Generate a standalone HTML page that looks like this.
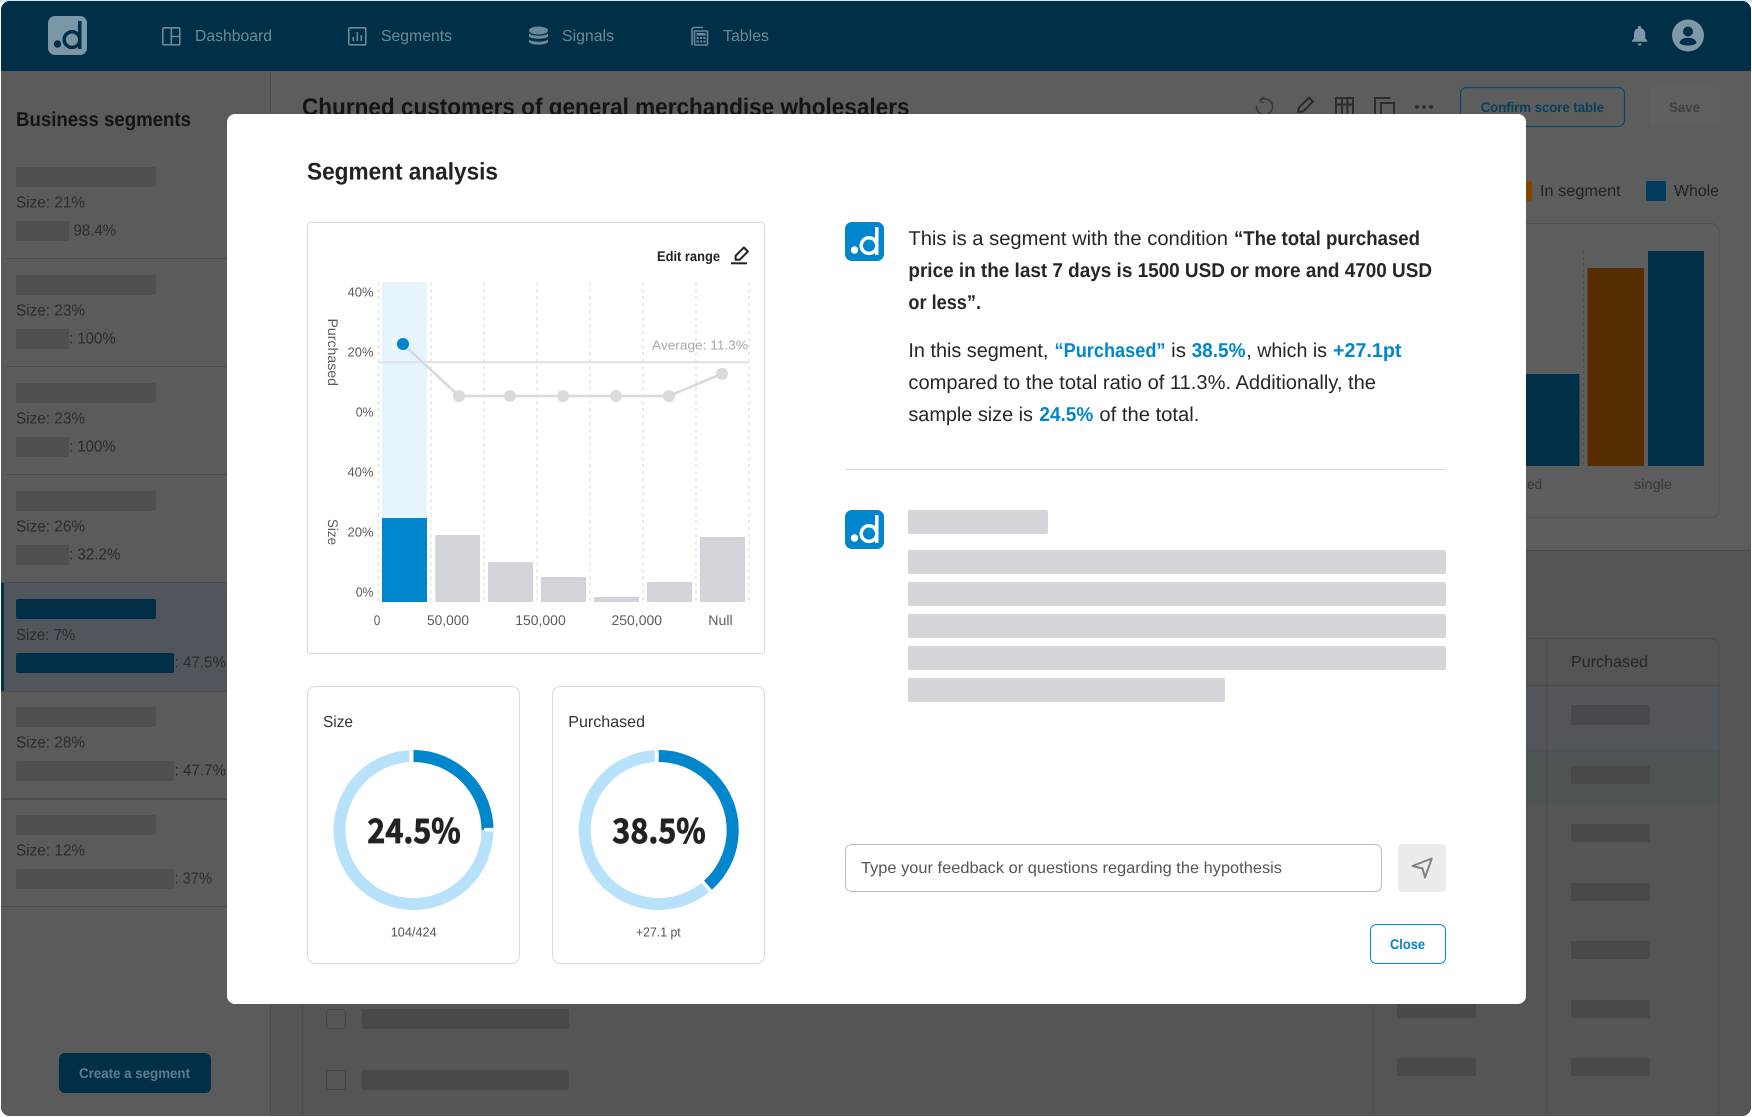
<!DOCTYPE html>
<html lang="en">
<head>
<meta charset="utf-8">
<title>Segment analysis</title>
<style>
html,body{margin:0;padding:0;background:#fff;width:1752px;height:1117px;overflow:hidden}
svg{display:block}
text{font-family:"Liberation Sans",sans-serif;text-rendering:geometricPrecision}
.b{font-weight:700}
</style>
</head>
<body>
<svg width="1752" height="1117" viewBox="0 0 1752 1117" xmlns="http://www.w3.org/2000/svg">
<defs>
<clipPath id="frame"><rect x="1" y="1" width="1750" height="1115" rx="9"/></clipPath>
<symbol id="logo" viewBox="0 0 39 39">
<rect width="39" height="39" rx="7" fill="#0086cc"/>
<circle cx="9.5" cy="28" r="3.7" fill="#fff"/>
<circle cx="24" cy="23.6" r="7.8" fill="none" stroke="#fff" stroke-width="3.5"/>
<rect x="30" y="5" width="3.5" height="28" fill="#fff"/>
</symbol>
</defs>
<rect width="1752" height="1117" fill="#fff"/>
<rect x="0" y="0" width="1752" height="2" fill="#d4e8f4"/>
<g clip-path="url(#frame)">
<rect width="1752" height="1117" fill="#595959"/>
<rect x="271" y="71" width="1481" height="480" fill="#5d5d5d"/>
<rect x="271" y="551" width="1481" height="566" fill="#555"/>
<rect y="71" width="271" height="1046" fill="#5b5b5b"/>
<rect y="0" width="1752" height="71" fill="#012f47"/>

<!-- nav -->
<rect x="48" y="16" width="39" height="39" rx="7" fill="#7b97a6"/>
<circle cx="57.5" cy="44" r="3.7" fill="#012f47"/>
<circle cx="72" cy="39.6" r="7.8" fill="none" stroke="#012f47" stroke-width="3.5"/>
<rect x="78" y="21" width="3.5" height="28" fill="#012f47"/>

<g fill="none" stroke="#6c8899" stroke-width="1.6">
<rect x="162.8" y="27.8" width="17" height="17" rx="1.2"/>
<path d="M171.3 27.8v17M171.3 36.5h8.5"/>
<rect x="348.8" y="27.8" width="17" height="17" rx="1.2"/>
<path d="M353.3 41v-4M357.3 41v-9M361.3 41v-6"/>
<path d="M692 45V29.5a2 2 0 0 1 2-2h9"/>
<rect x="694.5" y="31" width="13" height="14" rx="1"/>
</g>
<g fill="#6c8899">
<ellipse cx="538.5" cy="30.5" rx="9.5" ry="4"/>
<path d="M529 33.5c2 2.8 17 2.8 19 0v3c-2 3-17 3-19 0z"/>
<path d="M529 39.5c2 2.8 17 2.8 19 0v2.5c-2 3.6-17 3.6-19 0z"/>
<rect x="696.5" y="33" width="9" height="2.5"/>
<rect x="696.5" y="37" width="2.2" height="2"/><rect x="700" y="37" width="2.2" height="2"/><rect x="703.3" y="37" width="2.2" height="2"/>
<rect x="696.5" y="40.5" width="2.2" height="2"/><rect x="700" y="40.5" width="2.2" height="2"/><rect x="703.3" y="40.5" width="2.2" height="2"/>
</g>
<g fill="#6c8899" font-size="16">
<text x="195" y="41" textLength="77" lengthAdjust="spacingAndGlyphs">Dashboard</text>
<text x="381" y="41" textLength="71" lengthAdjust="spacingAndGlyphs">Segments</text>
<text x="562" y="41" textLength="52" lengthAdjust="spacingAndGlyphs">Signals</text>
<text x="723" y="41" textLength="46" lengthAdjust="spacingAndGlyphs">Tables</text>
</g>
<path d="M1639.7 26a1.6 1.6 0 0 1 1.6 1.6v.7c2.7.8 4 3 4 5.8v4.4l2 2.2v1h-15.3v-1l2-2.2v-4.4c0-2.8 1.3-5 4-5.8v-.7a1.6 1.6 0 0 1 1.7-1.6zM1637.7 43.5h4a2 2 0 0 1-4 0z" fill="#7e98a7"/>
<circle cx="1688" cy="35.5" r="16" fill="#7e98a7"/>
<circle cx="1688" cy="31.5" r="5" fill="#012f47"/>
<path d="M1679.5 43.5c0-4 4-5.8 8.5-5.8s8.5 1.8 8.5 5.8c-2.3 1.3-5.3 2-8.5 2s-6.2-.7-8.5-2z" fill="#012f47"/>

<!-- sidebar -->
<rect x="270" y="71" width="1" height="1046" fill="#4c4c4c"/>
<text class="b" x="16" y="126" font-size="20" fill="#141414" textLength="175" lengthAdjust="spacingAndGlyphs">Business segments</text>
<g fill="#4c4c4c">
<rect x="6" y="258" width="265" height="1"/><rect x="6" y="366" width="265" height="1"/><rect x="6" y="474" width="265" height="1"/><rect x="1" y="582" width="270" height="1"/><rect x="1" y="691" width="270" height="1"/><rect x="3" y="798" width="268" height="2"/><rect x="1" y="906" width="270" height="1"/>
</g>
<rect x="1" y="583" width="270" height="108" fill="#50565b"/>
<rect x="1" y="583" width="3" height="108" fill="#012f47"/>
<g fill="#505050">
<rect x="16" y="167" width="140" height="20" rx="1"/><rect x="16" y="221" width="53" height="20" rx="1"/>
<rect x="16" y="275" width="140" height="20" rx="1"/><rect x="16" y="329" width="53" height="20" rx="1"/>
<rect x="16" y="383" width="140" height="20" rx="1"/><rect x="16" y="437" width="53" height="20" rx="1"/>
<rect x="16" y="491" width="140" height="20" rx="1"/><rect x="16" y="545" width="53" height="20" rx="1"/>
<rect x="16" y="707" width="140" height="20" rx="1"/><rect x="16" y="761" width="158" height="20" rx="2"/>
<rect x="16" y="815" width="140" height="20" rx="1"/><rect x="16" y="869" width="158" height="20" rx="2"/>
</g>
<rect x="16" y="599" width="140" height="20" rx="2" fill="#012f47"/>
<rect x="16" y="653" width="158" height="20" rx="2" fill="#012f47"/>
<g font-size="16" fill="#2c2c2c">
<text x="16" y="207.5" textLength="69" lengthAdjust="spacingAndGlyphs">Size: 21%</text>
<text x="16" y="315.5" textLength="69" lengthAdjust="spacingAndGlyphs">Size: 23%</text>
<text x="16" y="423.5" textLength="69" lengthAdjust="spacingAndGlyphs">Size: 23%</text>
<text x="16" y="531.5" textLength="69" lengthAdjust="spacingAndGlyphs">Size: 26%</text>
<text x="16" y="640" textLength="59.3" lengthAdjust="spacingAndGlyphs">Size: 7%</text>
<text x="16" y="747.5" textLength="69" lengthAdjust="spacingAndGlyphs">Size: 28%</text>
<text x="16" y="855.5" textLength="69" lengthAdjust="spacingAndGlyphs">Size: 12%</text>
<text x="73.5" y="235.5" textLength="42.7" lengthAdjust="spacingAndGlyphs">98.4%</text>
<text x="69" y="343.5" textLength="46.7" lengthAdjust="spacingAndGlyphs">: 100%</text>
<text x="69" y="451.5" textLength="46.7" lengthAdjust="spacingAndGlyphs">: 100%</text>
<text x="69" y="559.5" textLength="51.4" lengthAdjust="spacingAndGlyphs">: 32.2%</text>
<text x="174.5" y="667.5" textLength="51.5" lengthAdjust="spacingAndGlyphs">: 47.5%</text>
<text x="174.5" y="775.5" textLength="51.5" lengthAdjust="spacingAndGlyphs">: 47.7%</text>
<text x="174.5" y="883.5" textLength="37.5" lengthAdjust="spacingAndGlyphs">: 37%</text>
</g>
<rect x="59" y="1053" width="152" height="40" rx="6" fill="#012f47"/>
<text class="b" x="79" y="1078" font-size="14" fill="#607c8d" textLength="111" lengthAdjust="spacingAndGlyphs">Create a segment</text>

<!-- main background -->
<text class="b" x="302" y="115" font-size="24" fill="#141414" textLength="607.5" lengthAdjust="spacingAndGlyphs">Churned customers of general merchandise wholesalers</text>
<g fill="none" stroke="#3a3a3a" stroke-width="1.7">
<path d="M1260 100a8 8 0 1 1-3.5 6"/><path d="M1263.5 97l-3.6 3 3.6 3.2"/>
</g>
<g fill="none" stroke="#2c2c2c" stroke-width="2">
<path d="M1298 112l1-4.5 10-10 4 4-10 10z"/>
<path d="M1336 114V98h17v16M1342 98v16M1347.5 98v16M1336 104.5h17"/>
<path d="M1375 114V98h15"/><path d="M1381 114v-11h13v11"/>
</g>
<g fill="#2c2c2c"><circle cx="1417" cy="107" r="1.9"/><circle cx="1424" cy="107" r="1.9"/><circle cx="1431" cy="107" r="1.9"/></g>
<rect x="1460.5" y="87.5" width="164" height="39" rx="6" fill="none" stroke="#094a68" stroke-width="1.2"/>
<text class="b" x="1480.7" y="112" font-size="14" fill="#063f5b" textLength="123.3" lengthAdjust="spacingAndGlyphs">Confirm score table</text>
<rect x="1650" y="87" width="70" height="40" rx="4" fill="#606060"/>
<text class="b" x="1669" y="112" font-size="14" fill="#3f3f3f" textLength="31" lengthAdjust="spacingAndGlyphs">Save</text>

<rect x="1510" y="181" width="22" height="20" rx="2" fill="#804600"/>
<text x="1540" y="196" font-size="16" fill="#222" textLength="80.7" lengthAdjust="spacingAndGlyphs">In segment</text>
<rect x="1646" y="181" width="20" height="20" rx="2" fill="#013e5e"/>
<text x="1674" y="196" font-size="16" fill="#222" textLength="45" lengthAdjust="spacingAndGlyphs">Whole</text>
<rect x="1480" y="223.5" width="239" height="294" rx="8" fill="none" stroke="#515151"/>
<path d="M1583.5 251v215" stroke="#4d4d4d" stroke-dasharray="3 3" fill="none"/>
<rect x="1500" y="374" width="79.5" height="92" rx="1" fill="#012f47"/>
<rect x="1587.5" y="268" width="56.5" height="198" rx="1" fill="#562e00"/>
<rect x="1648" y="251" width="56" height="215" rx="1" fill="#012f47"/>
<text x="1527" y="489" font-size="14" fill="#383838" textLength="15" lengthAdjust="spacingAndGlyphs">ed</text>
<text x="1634" y="489" font-size="14" fill="#383838" textLength="38" lengthAdjust="spacingAndGlyphs">single</text>
<rect x="1500" y="550" width="252" height="1" fill="#4d4d4d"/>

<!-- table -->
<rect x="1370" y="686" width="349" height="64" fill="#52565a"/>
<rect x="1370" y="750" width="349" height="55" fill="#4e5453"/>
<path d="M1373 638V1117M1547 638V1117" stroke="#4a4a4a" fill="none"/>
<path d="M1373 638.5H1711a8 8 0 0 1 8 8V1117M1373 685.5H1719" stroke="#4a4a4a" fill="none"/>
<path d="M302.5 980V1117" stroke="#4c4c4c" fill="none"/>
<text x="1571" y="667" font-size="16" fill="#262626" textLength="77" lengthAdjust="spacingAndGlyphs">Purchased</text>
<g fill="#47494b">
<rect x="1571" y="705" width="79" height="20" rx="2"/><rect x="1571" y="766" width="79" height="18" rx="2"/><rect x="1571" y="824" width="79" height="18" rx="2"/><rect x="1571" y="883" width="79" height="18" rx="2"/><rect x="1571" y="941" width="79" height="18" rx="2"/><rect x="1571" y="1000" width="79" height="18" rx="2"/><rect x="1571" y="1058" width="79" height="18" rx="2"/>
<rect x="1397" y="1000" width="79" height="18" rx="2"/><rect x="1397" y="1058" width="79" height="18" rx="2"/>
<rect x="362" y="1009" width="207" height="20" rx="2"/><rect x="362" y="1070" width="207" height="20" rx="2"/>
</g>
<rect x="326.5" y="1009.5" width="19" height="19" rx="3" fill="none" stroke="#454545"/>
<rect x="326.5" y="1070.5" width="19" height="19" rx="3" fill="none" stroke="#454545"/>
</g>

<!-- modal -->
<rect x="227" y="114" width="1299" height="890" rx="8" fill="#fff"/>
<text class="b" x="307" y="179.5" font-size="24" fill="#222" textLength="191" lengthAdjust="spacingAndGlyphs">Segment analysis</text>

<!-- chart card -->
<rect x="307.5" y="222.5" width="457" height="431" rx="3" fill="#fff" stroke="#d9d9d9"/>
<text class="b" x="657" y="261" font-size="14" fill="#222" textLength="63" lengthAdjust="spacingAndGlyphs">Edit range</text>
<path d="M735.6 259.8v-4l8.3-8.3 4 4-8.3 8.3z" fill="none" stroke="#222" stroke-width="2" stroke-linejoin="round"/>
<path d="M731 263.3h16" stroke="#222" stroke-width="2"/>
<rect x="382" y="282" width="45" height="236" fill="#e6f4fd"/>
<path d="M378.5 282V602M431 282V602M484 282V602M537 282V602M590 282V602M643 282V602M696 282V602M749 282V602" stroke="#e3e3e3" stroke-width="1.4" stroke-dasharray="3.5 3.5" fill="none"/>
<rect x="382" y="518" width="45" height="84" fill="#0086cc"/>
<g fill="#d2d4d9">
<rect x="435.3" y="535" width="44.7" height="67"/>
<rect x="488" y="562" width="45" height="40"/>
<rect x="541" y="577" width="45" height="25"/>
<rect x="594" y="597" width="45" height="5"/>
<rect x="647" y="582" width="45" height="20"/>
<rect x="700" y="537" width="45" height="65"/>
</g>
<path d="M378 362.2H749" stroke="#e3e3e3" stroke-width="2.4" fill="none"/>
<path d="M403 344L459 396H669L722 373.7" stroke="#d9dadd" stroke-width="2.6" fill="none"/>
<g fill="#d9dadd"><circle cx="459" cy="396" r="6"/><circle cx="510" cy="396" r="6"/><circle cx="563" cy="396" r="6"/><circle cx="616" cy="396" r="6"/><circle cx="669" cy="396" r="6"/><circle cx="722" cy="373.7" r="6"/></g>
<circle cx="403" cy="344" r="6" fill="#0086cc"/>
<text x="652" y="349.5" font-size="13" fill="#a9a9a9" textLength="96" lengthAdjust="spacingAndGlyphs">Average: 11.3%</text>
<g font-size="13" fill="#5c5c5c">
<text x="347.5" y="296.5" textLength="26" lengthAdjust="spacingAndGlyphs">40%</text>
<text x="347.5" y="356.5" textLength="26" lengthAdjust="spacingAndGlyphs">20%</text>
<text x="355.7" y="416.5" textLength="17.8" lengthAdjust="spacingAndGlyphs">0%</text>
<text x="347.5" y="476.5" textLength="26" lengthAdjust="spacingAndGlyphs">40%</text>
<text x="347.5" y="536.5" textLength="26" lengthAdjust="spacingAndGlyphs">20%</text>
<text x="355.7" y="596.5" textLength="17.8" lengthAdjust="spacingAndGlyphs">0%</text>
<text transform="translate(328,318.5) rotate(90)" font-size="14" textLength="67.5" lengthAdjust="spacingAndGlyphs">Purchased</text>
<text transform="translate(328,519) rotate(90)" font-size="14" textLength="26" lengthAdjust="spacingAndGlyphs">Size</text>
</g>
<g font-size="14" fill="#5c5c5c">
<text x="373.7" y="625" textLength="6.6" lengthAdjust="spacingAndGlyphs">0</text>
<text x="427" y="625" textLength="42" lengthAdjust="spacingAndGlyphs">50,000</text>
<text x="515.3" y="625" textLength="50.4" lengthAdjust="spacingAndGlyphs">150,000</text>
<text x="611.5" y="625" textLength="50.5" lengthAdjust="spacingAndGlyphs">250,000</text>
<text x="708.3" y="625" textLength="24.4" lengthAdjust="spacingAndGlyphs">Null</text>
</g>

<!-- donut cards -->
<rect x="307.5" y="686.5" width="212" height="277" rx="8" fill="#fff" stroke="#d9d9d9"/>
<rect x="552.5" y="686.5" width="212" height="277" rx="8" fill="#fff" stroke="#d9d9d9"/>
<text x="323" y="727" font-size="16" fill="#333" textLength="30" lengthAdjust="spacingAndGlyphs">Size</text>
<text x="568.3" y="727" font-size="16" fill="#333" textLength="76.7" lengthAdjust="spacingAndGlyphs">Purchased</text>

<circle cx="413.5" cy="830" r="74" fill="none" stroke="#b8e1fb" stroke-width="12"/>
<circle cx="413.5" cy="830" r="74" fill="none" stroke="#0086cc" stroke-width="12" pathLength="100" stroke-dasharray="25 75" transform="rotate(-90 413.5 830)"/>
<path d="M411.5 748V764" stroke="#fff" stroke-width="4" fill="none"/>
<path d="M484 829.6H496" stroke="#fff" stroke-width="3.4" fill="none"/>
<circle cx="658.7" cy="830" r="74" fill="none" stroke="#b8e1fb" stroke-width="12"/>
<circle cx="658.7" cy="830" r="74" fill="none" stroke="#0086cc" stroke-width="12" pathLength="100" stroke-dasharray="38.9 61.1" transform="rotate(-90 658.7 830)"/>
<path d="M656.7 748V764" stroke="#fff" stroke-width="4" fill="none"/>
<path d="M701.5 880.2L711.9 892.3" stroke="#fff" stroke-width="3.4" fill="none"/>
<g font-size="33.5" fill="#222" stroke="#222" stroke-width=".8">
<text x="367.3" y="843" style="font-family:'Noto Sans CJK JP',sans-serif;font-weight:700" textLength="93.4" lengthAdjust="spacingAndGlyphs">24.5%</text>
<text x="612.3" y="843" style="font-family:'Noto Sans CJK JP',sans-serif;font-weight:700" textLength="93.4" lengthAdjust="spacingAndGlyphs">38.5%</text>
</g>
<text x="390.7" y="936.5" font-size="13" fill="#555" textLength="46" lengthAdjust="spacingAndGlyphs">104/424</text>
<text x="636" y="936.5" font-size="13" fill="#555" textLength="44.7" lengthAdjust="spacingAndGlyphs">+27.1 pt</text>

<!-- insight -->
<use href="#logo" x="845" y="222" width="39" height="39"/>
<g font-size="20" fill="#262626">
<text x="908.4" y="245" textLength="319.6" lengthAdjust="spacingAndGlyphs">This is a segment with the condition</text>
<text class="b" x="1234" y="245" textLength="186" lengthAdjust="spacingAndGlyphs">“The total purchased</text>
<text class="b" x="908.4" y="277" textLength="523.6" lengthAdjust="spacingAndGlyphs">price in the last 7 days is 1500 USD or more and 4700 USD</text>
<text class="b" x="908.4" y="309" textLength="72.6" lengthAdjust="spacingAndGlyphs">or less”.</text>
<text x="908.4" y="357" textLength="140" lengthAdjust="spacingAndGlyphs">In this segment,</text>
<text class="b" x="1054.5" y="357" fill="#0086cc" textLength="111" lengthAdjust="spacingAndGlyphs">“Purchased”</text>
<text x="1171.2" y="357" textLength="14.8" lengthAdjust="spacingAndGlyphs">is</text>
<text class="b" x="1191.6" y="357" fill="#0086cc" textLength="53.9" lengthAdjust="spacingAndGlyphs">38.5%</text>
<text x="1246.3" y="357" textLength="80.7" lengthAdjust="spacingAndGlyphs">, which is</text>
<text class="b" x="1333" y="357" fill="#0086cc" textLength="68.4" lengthAdjust="spacingAndGlyphs">+27.1pt</text>
<text x="908.4" y="389" textLength="467.6" lengthAdjust="spacingAndGlyphs">compared to the total ratio of 11.3%. Additionally, the</text>
<text x="908.4" y="421" textLength="124.6" lengthAdjust="spacingAndGlyphs">sample size is</text>
<text class="b" x="1039.4" y="421" fill="#0086cc" textLength="53.9" lengthAdjust="spacingAndGlyphs">24.5%</text>
<text x="1099.4" y="421" textLength="100" lengthAdjust="spacingAndGlyphs">of the total.</text>
</g>
<rect x="845" y="469" width="601" height="1" fill="#d9d9d9"/>
<use href="#logo" x="845" y="510" width="39" height="39"/>
<g fill="#d5d6da">
<rect x="908" y="510" width="140" height="24" rx="2"/>
<rect x="908" y="550" width="538" height="24" rx="2"/>
<rect x="908" y="582" width="538" height="24" rx="2"/>
<rect x="908" y="614" width="538" height="24" rx="2"/>
<rect x="908" y="646" width="538" height="24" rx="2"/>
<rect x="908" y="678" width="317" height="24" rx="2"/>
</g>

<!-- input -->
<rect x="845.5" y="844.5" width="536" height="47" rx="6" fill="#fff" stroke="#bdbdbd"/>
<text x="861" y="873" font-size="16" fill="#555" textLength="421" lengthAdjust="spacingAndGlyphs">Type your feedback or questions regarding the hypothesis</text>
<rect x="1398" y="844" width="48" height="48" rx="4" fill="#ececec"/>
<path d="M1431.7 858.5L1412.5 866L1422.5 868.5L1425 877.5z" fill="none" stroke="#808080" stroke-width="2" stroke-linejoin="round"/>
<rect x="1370.5" y="924.5" width="75" height="39" rx="6" fill="#fff" stroke="#0086cc"/>
<text class="b" x="1390" y="949" font-size="14" fill="#0086cc" textLength="35" lengthAdjust="spacingAndGlyphs">Close</text>
</svg>
</body>
</html>
